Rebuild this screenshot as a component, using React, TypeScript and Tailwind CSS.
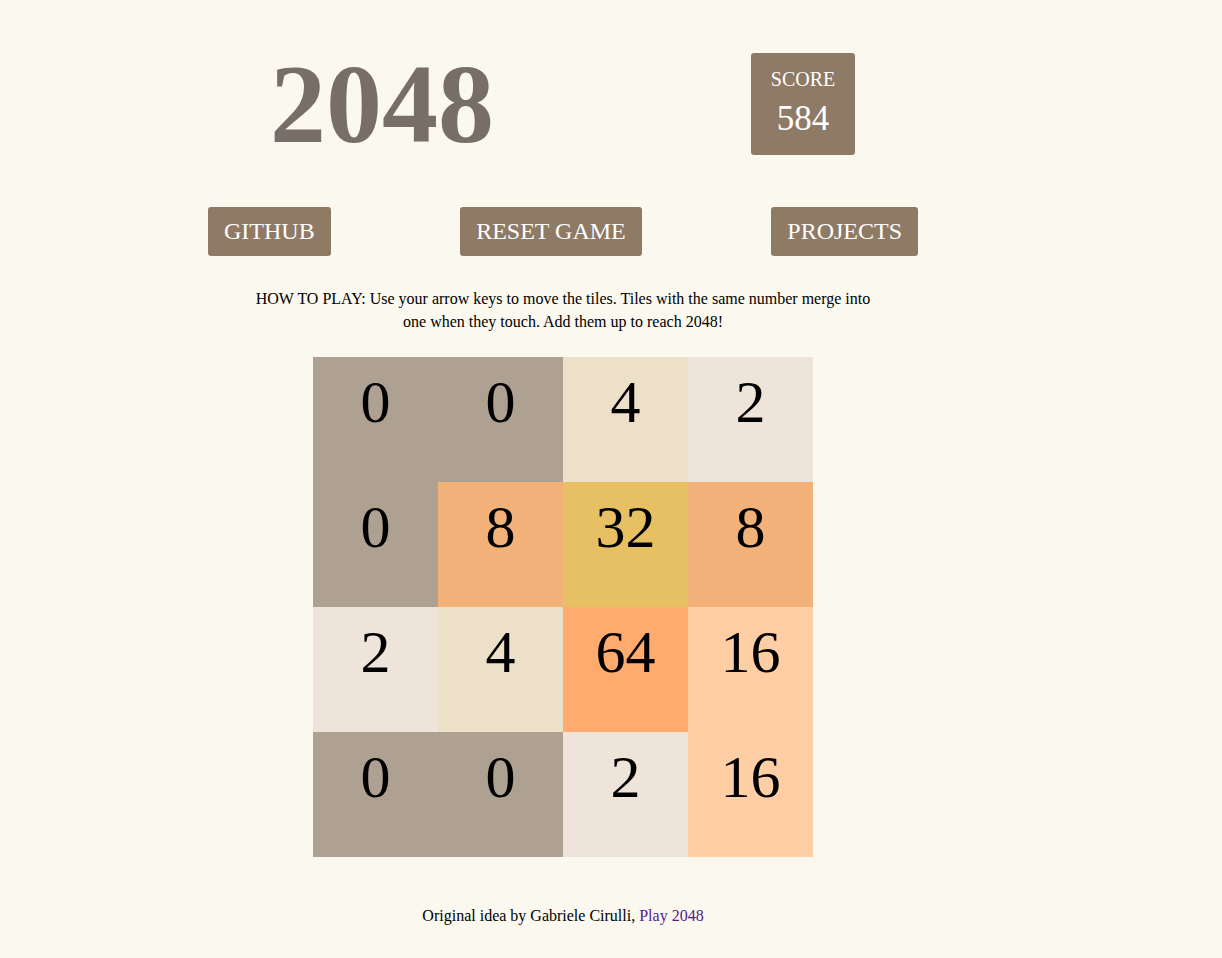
import React from "react";

const board = [
  [0, 0, 4, 2],
  [0, 8, 32, 8],
  [2, 4, 64, 16],
  [0, 0, 2, 16],
];

function tileClass(v: number): string {
  switch (v) {
    case 2:
      return "bg-[#eee4da]";
    case 4:
      return "bg-[#ede0c8]";
    case 8:
      return "bg-[#f2b179]";
    case 16:
      return "bg-[#ffcea4]";
    case 32:
      return "bg-[#e8c064]";
    case 64:
      return "bg-[#ffab6e]";
    default:
      return "bg-[#afa192]";
  }
}

export default function App() {
  return (
    <div className="min-h-screen w-full bg-[#faf8ef] font-['Liberation_Serif','Times_New_Roman',serif] text-black">
      <div className="ml-[208px] w-[710px] pt-[42px]">
        <header className="flex h-[124px] items-center justify-between pl-[62px] pr-[63px]">
          <h1 className="text-[112px] font-bold leading-[124px] text-[#776e65]">2048</h1>
          <div className="flex h-[102px] w-[104px] flex-col items-center rounded-[3px] bg-[#8f7a66] pt-[15px] text-white">
            <div className="text-[20px] leading-[23px]">SCORE</div>
            <div className="mt-[8px] text-[35px] leading-[40px]">584</div>
          </div>
        </header>

        <div className="mt-[41px] flex justify-between">
          <button className="rounded-[3px] bg-[#8f7a66] px-[16px] py-[10px] text-[24px] leading-[29px] text-white">
            GITHUB
          </button>
          <button className="rounded-[3px] bg-[#8f7a66] px-[16px] py-[10px] text-[24px] leading-[29px] text-white">
            RESET GAME
          </button>
          <button className="rounded-[3px] bg-[#8f7a66] px-[16px] py-[10px] text-[24px] leading-[29px] text-white">
            PROJECTS
          </button>
        </div>

        <p className="mx-auto mt-[31px] max-w-[630px] text-center text-[16px] leading-[23px]">
          HOW TO PLAY: Use your arrow keys to move the tiles. Tiles with the same number merge into one
          when they touch. Add them up to reach 2048!
        </p>

        <div className="mx-auto mt-[24px] grid w-[500px] grid-cols-4">
          {board.flat().map((v, i) => (
            <div
              key={i}
              className={`flex h-[125px] w-[125px] justify-center pt-[11px] text-[60px] leading-[69px] ${tileClass(v)}`}
            >
              {v}
            </div>
          ))}
        </div>

        <footer className="mt-[47px] text-center text-[16px] leading-[23px]">
          Original idea by Gabriele Cirulli,{" "}
          <a href="#" className="text-[#551a8b]">
            Play 2048
          </a>
        </footer>
      </div>
    </div>
  );
}
